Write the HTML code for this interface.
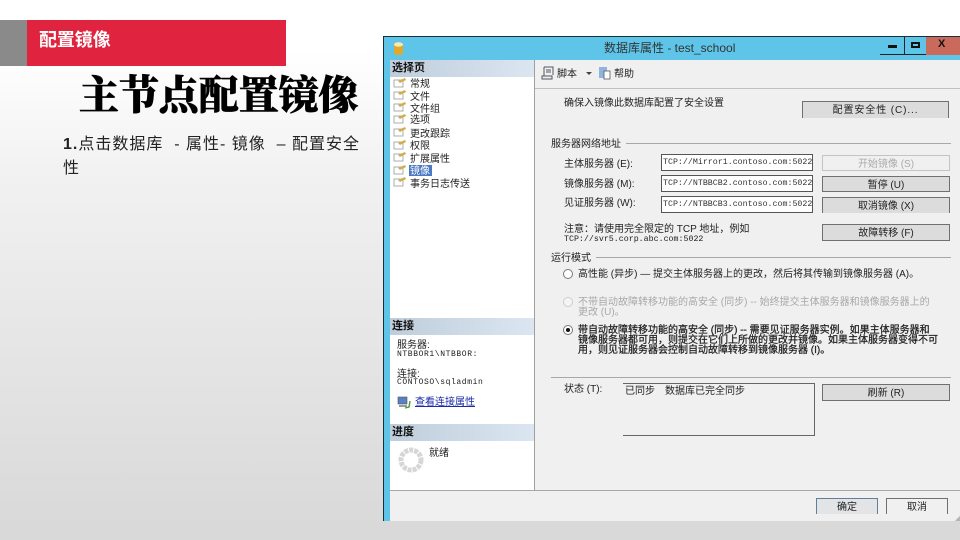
<!DOCTYPE html>
<html lang="zh-CN"><head><meta charset="utf-8"><title>配置镜像</title>
<style>
html,body{margin:0;padding:0}
body{width:960px;height:540px;overflow:hidden;position:relative;background:linear-gradient(#ffffff 0,#ffffff 50px,#f1f1f2 180px,#d8d8d8 540px);font-family:"Liberation Sans","WenQuanYi Zen Hei","Noto Sans CJK SC",sans-serif;color:#111}
div,span{position:absolute;white-space:nowrap}
.t{font-size:10px;line-height:11px;color:#222}
.b{background:#dcdcdc;border:1px solid #707070;box-sizing:border-box;text-align:center;font-size:10px;line-height:17px;color:#222}
.hd{left:390px;width:144px;height:17px;background:linear-gradient(90deg,#bfcddb,#dbe6f1);font-size:11px;line-height:17px;color:#111;font-weight:bold;text-indent:2px}
.tx{left:661px;width:152px;height:17px;background:#fff;border:1px solid #555;box-sizing:border-box;font:8.3px/15px "Liberation Mono",monospace;color:#333;overflow:hidden;text-indent:1px}
.ln{height:1px;background:#a8a8a8}
.hv{-webkit-text-stroke:.25px #222}
</style></head><body>
<div style="left:0;top:20px;width:27px;height:46px;background:#8a8a8a"></div>
<div style="left:27px;top:20px;width:259px;height:46px;background:#e0233e"></div>
<div style="left:39px;top:29px;font-size:18px;line-height:22px;font-weight:bold;color:#fff;letter-spacing:-.1px">配置镜像</div>
<div style="left:79px;top:71px;font-family:'Liberation Serif','Noto Serif CJK SC',serif;font-size:40px;line-height:50px;font-weight:900;color:#000;-webkit-text-stroke:.6px #000;letter-spacing:-.1px">主节点配置镜像</div>
<div style="left:63px;top:133px;width:300px;white-space:normal;font-size:16px;line-height:24px;letter-spacing:1px;color:#222"><b>1.</b>点击数据库&nbsp; - 属性- 镜像 &nbsp;– 配置安全<br>性</div>

<div style="left:383px;top:36px;width:577px;height:485px;background:#5ec5e9;border-top:1px solid #16303c;border-left:1px solid #16303c;box-sizing:border-box"></div>
<div style="left:390px;top:60px;width:570px;height:461px;background:#f0f0f0"></div>
<svg style="position:absolute;left:392px;top:41px" width="14" height="15" viewBox="0 0 14 15"><rect x="2" y="2" width="9" height="12" rx="3" fill="#e0a92c"/><ellipse cx="6.5" cy="3.5" rx="4.5" ry="2.2" fill="#fbeab0"/></svg>
<div style="left:604px;top:41px;font-size:12px;line-height:14px;color:#333">数据库属性 - test_school</div>
<div style="left:880px;top:54px;width:24px;height:1px;background:#222"></div>
<div style="left:888px;top:45px;width:9px;height:3px;background:#111"></div>
<div style="left:904px;top:37px;width:1px;height:18px;background:#222"></div>
<div style="left:905px;top:54px;width:21px;height:1px;background:#222"></div>
<div style="left:911px;top:42px;width:9px;height:6px;border:2px solid #111;box-sizing:border-box"></div>
<div style="left:926px;top:37px;width:34px;height:18px;background:#c96a5c"></div>
<div style="left:938px;top:38px;font-size:11px;line-height:13px;font-weight:bold;color:#111">X</div>

<div style="left:390px;top:60px;width:144px;height:430px;background:#fff"></div>
<div style="left:534px;top:60px;width:1px;height:430px;background:#a0a0a0"></div>
<div style="left:390px;top:490px;width:570px;height:1px;background:#a8a8a8"></div>
<div style="left:535px;top:88px;width:425px;height:1px;background:#c0c0c0"></div>
<div class="hd" style="top:60px">选择页</div>
<div class="hd" style="top:318px">连接</div>
<div class="hd" style="top:424px">进度</div>

<svg style="position:absolute;left:393px;top:77px" width="14" height="112" viewBox="0 0 14 112">
<defs><g id="pi"><rect x="1" y="3" width="9" height="7" fill="#fff" stroke="#9a9a9a" stroke-width=".8"/><path d="M5 4l7-3 1 2-6 3z" fill="#cfae4e"/></g></defs>
<use href="#pi" y="0"/><use href="#pi" y="12"/><use href="#pi" y="24"/><use href="#pi" y="36"/><use href="#pi" y="49"/><use href="#pi" y="62"/><use href="#pi" y="74"/><use href="#pi" y="87"/><use href="#pi" y="99"/></svg>
<div style="left:409px;top:165px;width:23px;height:11px;background:#4b79c4"></div>
<div class="t" style="left:410px;top:79px">常规</div>
<div class="t" style="left:410px;top:92px">文件</div>
<div class="t" style="left:410px;top:104px">文件组</div>
<div class="t" style="left:410px;top:115px">选项</div>
<div class="t" style="left:410px;top:129px">更改跟踪</div>
<div class="t" style="left:410px;top:141px">权限</div>
<div class="t" style="left:410px;top:154px">扩展属性</div>
<div class="t" style="left:410px;top:166px;color:#fff">镜像</div>
<div class="t" style="left:410px;top:179px">事务日志传送</div>

<div class="t" style="left:397px;top:340px">服务器:</div>
<div class="t" style="left:397px;top:350px;font:8px/10px 'Liberation Mono',monospace;letter-spacing:.6px">NTBBOR1\NTBBOR:</div>
<div class="t" style="left:397px;top:369px">连接:</div>
<div class="t" style="left:397px;top:378px;font:8px/10px 'Liberation Mono',monospace;letter-spacing:.6px">CONTOSO\sqladmin</div>
<svg style="position:absolute;left:397px;top:396px" width="14" height="13" viewBox="0 0 14 13"><rect x="1" y="1" width="9" height="7" fill="#5b7fc4" stroke="#555" stroke-width=".6"/><rect x="2" y="9" width="8" height="2" fill="#999"/><path d="M8 12l4-1 1-6" fill="none" stroke="#4a9a3a" stroke-width="1.4"/></svg>
<div class="t" style="left:415px;top:397px;color:#1a2aa8;text-decoration:underline">查看连接属性</div>
<svg style="position:absolute;left:398px;top:447px" width="26" height="26" viewBox="0 0 26 26"><circle cx="13" cy="13" r="10" fill="none" stroke="#d6d6d6" stroke-width="5" stroke-dasharray="4 1"/></svg>
<div class="t" style="left:429px;top:448px">就绪</div>

<svg style="position:absolute;left:541px;top:66px" width="14" height="14" viewBox="0 0 14 14"><path d="M3 1h9v8M3 1v9M1 10h10v3H1zM5 4h5M5 6h5" fill="none" stroke="#556" stroke-width="1"/></svg>
<div class="t" style="left:557px;top:69px">脚本</div>
<div style="left:586px;top:72px;width:0;height:0;border:3px solid transparent;border-top:3px solid #444"></div>
<svg style="position:absolute;left:598px;top:66px" width="14" height="14" viewBox="0 0 14 14"><rect x="1" y="1" width="8" height="11" fill="#8fb4dd"/><rect x="6" y="5" width="6" height="8" fill="#fff" stroke="#556" stroke-width=".8"/></svg>
<div class="t" style="left:614px;top:69px">帮助</div>

<div class="t" style="left:564px;top:98px">确保入镜像此数据库配置了安全设置</div>
<div class="b" style="left:802px;top:101px;width:147px;height:17px;border-bottom:0;line-height:18px;letter-spacing:.9px">配置安全性 (C)...</div>

<div class="t" style="left:551px;top:139px">服务器网络地址</div>
<div class="ln" style="left:626px;top:143px;width:325px"></div>
<div class="t" style="left:564px;top:159px">主体服务器 (E):</div>
<div class="t" style="left:564px;top:179px">镜像服务器 (M):</div>
<div class="t" style="left:564px;top:198px">见证服务器 (W):</div>
<div class="tx" style="top:154px">TCP://Mirror1.contoso.com:5022</div>
<div class="tx" style="top:175px">TCP://NTBBCB2.contoso.com:5022</div>
<div class="tx" style="top:196px">TCP://NTBBCB3.contoso.com:5022</div>
<div class="b" style="left:822px;top:155px;width:128px;height:16px;background:#f0f0f0;border-color:#c4c4c4;color:#aaa">开始镜像 (S)</div>
<div class="b" style="left:822px;top:176px;width:128px;height:16px">暂停 (U)</div>
<div class="b" style="left:822px;top:197px;width:128px;height:16px;border-bottom:0">取消镜像 (X)</div>
<div class="t" style="left:564px;top:224px">注意：请使用完全限定的 TCP 地址，例如</div>
<div class="t" style="left:564px;top:234px;font:8.3px/11px 'Liberation Mono',monospace">TCP://svr5.corp.abc.com:5022</div>
<div class="b" style="left:822px;top:224px;width:128px;height:17px">故障转移 (F)</div>

<div class="t" style="left:551px;top:253px">运行模式</div>
<div class="ln" style="left:596px;top:257px;width:355px"></div>
<div style="left:563px;top:269px;width:8px;height:8px;border:1px solid #777;border-radius:50%;background:#fff"></div>
<div class="t" style="left:578px;top:269px">高性能 (异步) — 提交主体服务器上的更改，然后将其传输到镜像服务器 (A)。</div>
<div style="left:563px;top:297px;width:8px;height:8px;border:1px solid #ccc;border-radius:50%;background:#f5f5f5"></div>
<div class="t" style="left:578px;top:297px;color:#a8a8a8">不带自动故障转移功能的高安全 (同步) -- 始终提交主体服务器和镜像服务器上的</div>
<div class="t" style="left:578px;top:307px;color:#a8a8a8">更改 (U)。</div>
<div style="left:563px;top:325px;width:8px;height:8px;border:1px solid #777;border-radius:50%;background:#fff"></div>
<div style="left:566px;top:328px;width:4px;height:4px;border-radius:50%;background:#111"></div>
<div class="t hv" style="left:578px;top:326px;line-height:10px">带自动故障转移功能的高安全 (同步) -- 需要见证服务器实例。如果主体服务器和</div>
<div class="t hv" style="left:578px;top:336px;line-height:10px">镜像服务器都可用，则提交在它们上所做的更改并镜像。如果主体服务器变得不可</div>
<div class="t hv" style="left:578px;top:346px;line-height:10px">用，则见证服务器会控制自动故障转移到镜像服务器 (I)。</div>

<div class="ln" style="left:551px;top:377px;width:400px"></div>
<div class="t" style="left:564px;top:384px">状态 (T):</div>
<div style="left:623px;top:383px;width:192px;height:53px;border-top:1px solid #666;border-right:1px solid #666;border-bottom:1px solid #666;box-sizing:border-box"></div>
<div class="t" style="left:625px;top:386px">已同步</div>
<div class="t" style="left:665px;top:386px">数据库已完全同步</div>
<div class="b" style="left:822px;top:384px;width:128px;height:17px">刷新 (R)</div>

<div class="b" style="left:816px;top:498px;width:62px;height:16px;background:#e2e4e6;border-color:#5f7f9c;border-bottom:0;line-height:18px">确定</div>
<div class="b" style="left:886px;top:498px;width:62px;height:16px;background:#f0f0f0;border-bottom:0;line-height:18px">取消</div>
<div style="left:955px;top:516px;width:5px;height:5px;background:linear-gradient(135deg,#f0f0f0 50%,#b5b5b5 50%)"></div>
<div style="left:0;top:521px;width:960px;height:19px;background:#d9d9d9"></div>
</body></html>
